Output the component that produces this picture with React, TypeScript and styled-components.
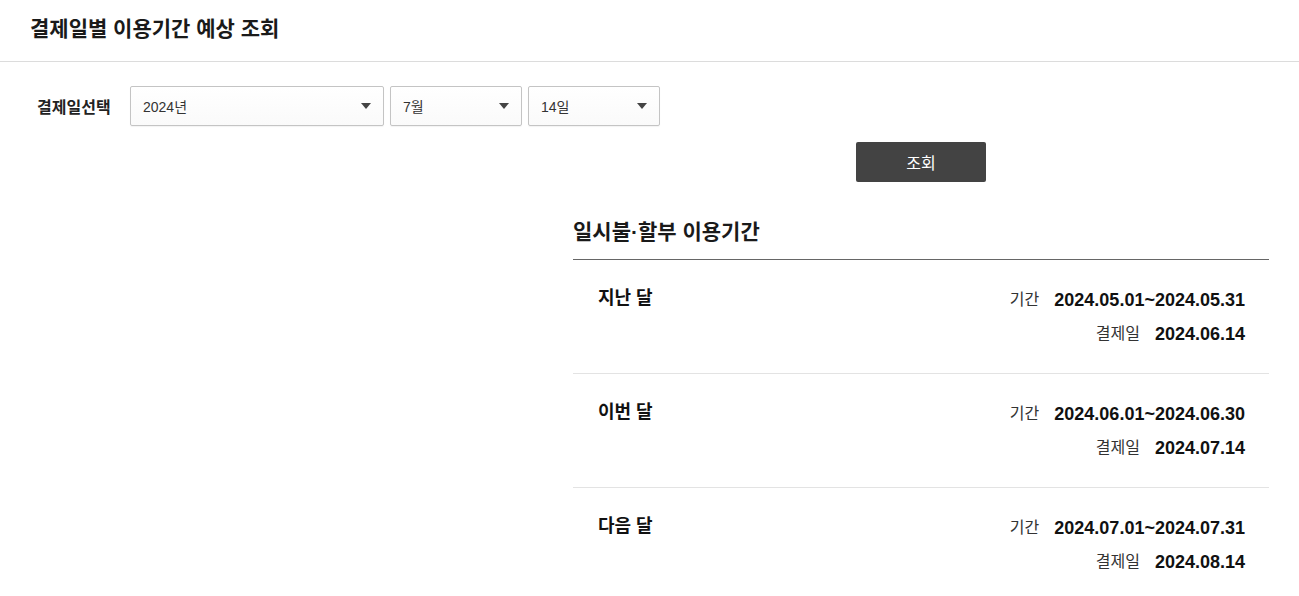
import React from "react";
import styled, { createGlobalStyle } from "styled-components";

const GlobalStyle = createGlobalStyle`
    body {
        margin: 0;
        background: #fff;
        color: #111;
        font-family: "Liberation Sans", "Noto Sans CJK KR", sans-serif;
    }
`;

const Header = styled.header`
    height: 61px;
    padding-left: 30px;
    border-bottom: 1px solid #dcdcdc;
    display: flex;
    align-items: center;
`;

const PageTitle = styled.h1`
    margin: 0;
    font-size: 21px;
    font-weight: bold;
    line-height: 24px;
    color: #1a1a1a;
    padding-bottom: 4px;
`;

const Body = styled.main`
    padding: 24px 30px 0 37px;
`;

const FormRow = styled.div`
    display: flex;
    align-items: center;
`;

const FormLabel = styled.span`
    width: 93px;
    font-size: 16px;
    font-weight: bold;
    color: #222;
`;

const SelectGroup = styled.div`
    display: flex;
    gap: 6px;
`;

const SelectBox = styled.div<{ $width: number }>`
    width: ${({ $width }) => $width}px;
    height: 40px;
    box-sizing: border-box;
    border: 1px solid #c4c4c4;
    border-radius: 2px;
    background: linear-gradient(#fff, #fafafa);
    box-shadow: 0 1px 1px rgba(0, 0, 0, 0.05);
    display: flex;
    align-items: center;
    justify-content: space-between;
    padding: 0 12px 0 12px;
    font-size: 14px;
    color: #333;
`;

const Caret = styled.span`
    width: 0;
    height: 0;
    border-left: 5px solid transparent;
    border-right: 5px solid transparent;
    border-top: 6px solid #444;
`;

const ResultArea = styled.div`
    display: flex;
    justify-content: flex-end;
`;

const ResultColumn = styled.section`
    width: 696px;
    display: flex;
    flex-direction: column;
`;

const SearchButton = styled.button`
    align-self: center;
    margin-top: 16px;
    width: 130px;
    height: 40px;
    border: none;
    border-radius: 2px;
    background: #434343;
    color: #fff;
    font-family: inherit;
    font-size: 16px;
    cursor: pointer;
`;

const SectionTitle = styled.h2`
    margin: 36px 0 0;
    padding-bottom: 13px;
    font-size: 21px;
    font-weight: bold;
    line-height: 28px;
    color: #1a1a1a;
    border-bottom: 1px solid #666;
`;

const PeriodRow = styled.div`
    height: 114px;
    box-sizing: border-box;
    padding: 27px 24px 0 25px;
    border-bottom: 1px solid #e3e3e3;
    display: flex;
    justify-content: space-between;
    align-items: flex-start;
`;

const PeriodName = styled.span`
    font-size: 18px;
    font-weight: bold;
    line-height: 22px;
    color: #111;
`;

const DetailList = styled.dl`
    margin: 0;
    display: flex;
    flex-direction: column;
    align-items: flex-end;
    gap: 12px;
    padding-top: 2px;
`;

const DetailLine = styled.div`
    display: flex;
    align-items: center;
    gap: 15px;
    line-height: 22px;
`;

const DetailLabel = styled.dt`
    font-size: 16px;
    color: #333;
`;

const DetailValue = styled.dd`
    margin: 0;
    font-size: 18px;
    font-weight: bold;
    color: #111;
`;

const periods = [
    { name: "지난 달", range: "2024.05.01~2024.05.31", payDate: "2024.06.14" },
    { name: "이번 달", range: "2024.06.01~2024.06.30", payDate: "2024.07.14" },
    { name: "다음 달", range: "2024.07.01~2024.07.31", payDate: "2024.08.14" }
];

const App: React.FC = () => {
    return (
        <>
            <GlobalStyle />
            <Header>
                <PageTitle>결제일별 이용기간 예상 조회</PageTitle>
            </Header>
            <Body>
                <FormRow>
                    <FormLabel>결제일선택</FormLabel>
                    <SelectGroup>
                        <SelectBox $width={254}>
                            2024년
                            <Caret />
                        </SelectBox>
                        <SelectBox $width={132}>
                            7월
                            <Caret />
                        </SelectBox>
                        <SelectBox $width={132}>
                            14일
                            <Caret />
                        </SelectBox>
                    </SelectGroup>
                </FormRow>
                <ResultArea>
                    <ResultColumn>
                        <SearchButton>조회</SearchButton>
                        <SectionTitle>일시불·할부 이용기간</SectionTitle>
                        {periods.map((period) => (
                            <PeriodRow key={period.name}>
                                <PeriodName>{period.name}</PeriodName>
                                <DetailList>
                                    <DetailLine>
                                        <DetailLabel>기간</DetailLabel>
                                        <DetailValue>{period.range}</DetailValue>
                                    </DetailLine>
                                    <DetailLine>
                                        <DetailLabel>결제일</DetailLabel>
                                        <DetailValue>{period.payDate}</DetailValue>
                                    </DetailLine>
                                </DetailList>
                            </PeriodRow>
                        ))}
                    </ResultColumn>
                </ResultArea>
            </Body>
        </>
    );
};

export default App;
